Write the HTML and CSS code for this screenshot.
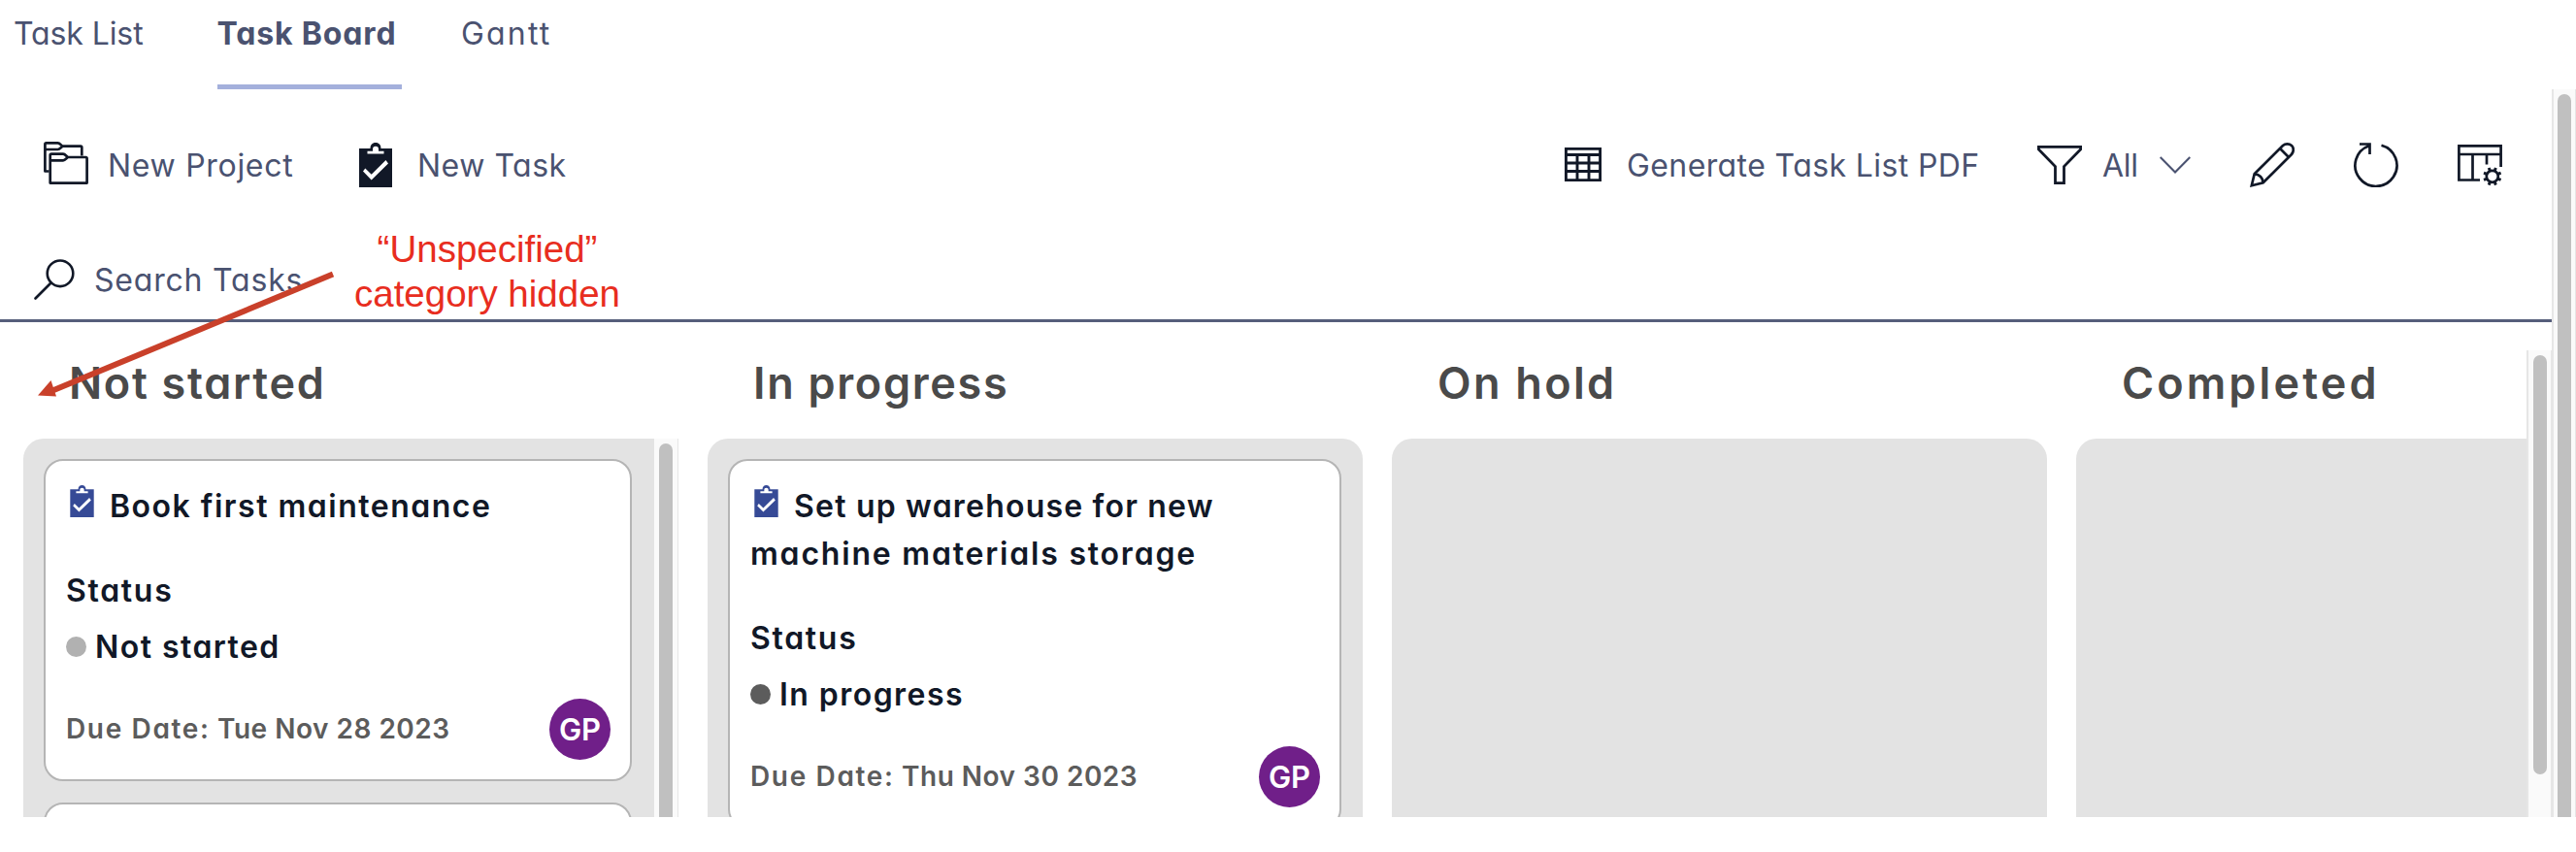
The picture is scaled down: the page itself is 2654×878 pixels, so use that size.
FILE: index.html
```html
<!DOCTYPE html>
<html lang="en">
<head>
<meta charset="utf-8">
<title>Task Board</title>
<link rel="stylesheet" href="styles.css">
</head>
<body>
<svg class="defs" aria-hidden="true">
  <symbol id="clipboard" viewBox="0 0 34 46">
    <path fill="currentColor" fill-rule="evenodd" d="M0 6H11.5C11.5 2.500 13.500 0 17 0S22.500 2.500 22.500 6H34V46H0ZM8.500 8.800V11.500H25.500V8.800H20V7C20 5 19 3.800 17 3.800S14 5 14 7V8.800ZM6.300 26.500 4 29.500 12.700 38.500 30 21.500 27.500 18 12.700 32.800Z"/>
  </symbol>
</svg>

<nav class="tabs">
  <a class="tab tab-list">Task List</a>
  <a class="tab tab-board">Task Board</a>
  <a class="tab tab-gantt">Gantt</a>
</nav>

<div class="frame">
  <main class="main">
    <div class="toolbar">
      <button class="tool">
        <svg class="ic-project" viewBox="0 0 46 44" fill="none" stroke="currentColor" stroke-width="2.700" stroke-linejoin="round">
          <path d="M5.500 30.500H1.400V2.700Q1.400 1.400 2.700 1.400H14.500C17 1.400 18.500 4.700 20 4.700H38Q39.300 4.700 39.300 6V14.500M1.400 8H14.500C17 8 18.500 4.700 20 4.700"/>
          <path d="M6.700 42.600V14Q6.700 12.700 8 12.700H20C22.500 12.700 24 16 25.500 16H43.300Q44.600 16 44.600 17.300V42.600ZM6.700 19.300H20C22.500 19.300 24 16 25.500 16"/>
        </svg>
        <span class="label-project">New Project</span>
      </button>
      <button class="tool tool-task">
        <svg class="ic-task"><use href="#clipboard"/></svg>
        <span class="label-task">New Task</span>
      </button>
      <div class="tools-end">
        <button class="tool tool-pdf">
          <svg class="ic-table" viewBox="0 0 38 35" fill="none" stroke="currentColor" stroke-width="2.900">
            <path d="M1.400 1.400H36.600V33.600H1.400ZM1.400 7.500H36.600M1.400 16H36.600M1.400 24.500H36.600M13 7.500V33.600M25 7.500V33.600"/>
          </svg>
          <span class="label-pdf">Generate Task List PDF</span>
        </button>
        <button class="tool tool-filter">
          <svg class="ic-filter" viewBox="0 0 46 40" fill="none" stroke="currentColor" stroke-width="2.800">
            <path d="M1.400 1.400H44.600V4L27.500 21.500V38.600H18.500V21.500L1.400 4Z"/>
          </svg>
          <span class="label-all">All</span>
          <svg class="ic-chevron" viewBox="0 0 32 18" fill="none" stroke="currentColor" stroke-width="2.100"><path d="M.7 1 16 16.500 31.300 1"/></svg>
        </button>
        <button class="tool">
          <svg class="ic-square" viewBox="0 0 46 46" fill="none" stroke="currentColor" stroke-width="2.700">
            <path d="M1.800 44.200 4.700 32.300 34 3C36.500.8 40.500.8 43 3S45.200 9.500 43 12L13.700 41.300ZM4.700 32.300C9.500 32.300 13.700 36.500 13.700 41.300M31 6 40 15"/>
          </svg>
        </button>
        <button class="tool">
          <svg class="ic-square" viewBox="0 0 46 46" fill="none" stroke="currentColor" stroke-width="2.700">
            <path d="M28.500 2.700A21.500 21.500 0 1 1 15.800 3.200M6 1.500H16.500V12"/>
          </svg>
        </button>
        <button class="tool">
          <svg class="ic-columns" viewBox="0 0 46 43" fill="none" stroke="currentColor" stroke-width="2.700">
            <path d="M23 36.500H1.400V1.400H44.600V23M1.400 10H44.600M15.500 10V36.500M30 10V20.500"/>
            <circle cx="35.800" cy="32.800" r="6"/>
            <path stroke-width="3" d="M38.100 27.300 39.400 24M41.300 30.500 44.600 29.200M41.300 35.100 44.600 36.400M38.100 38.300 39.400 41.600M33.500 38.300 32.200 41.600M30.300 35.100 27 36.400M30.300 30.500 27 29.200M33.500 27.300 32.200 24"/>
          </svg>
        </button>
      </div>
    </div>
    <div class="search">
      <svg class="ic-search" viewBox="0 0 42 42" fill="none" stroke="currentColor" stroke-width="2.600" stroke-linecap="round"><circle cx="27" cy="14.800" r="13.300"/><path d="M17.500 24.500 1.500 40.500"/></svg>
      <span class="label-search">Search Tasks</span>
    </div>

    <div class="board-area">
      <div class="board">
        <section class="column">
          <h2 class="heading">Not started</h2>
          <div class="lane lane-scroll">
            <div class="cards">
              <article class="card">
                <p class="title title-book"><svg class="ic-card"><use href="#clipboard"/></svg>Book first maintenance</p>
                <p class="status-label">Status</p>
                <p class="status"><i class="dot dot-light"></i>Not started</p>
                <div class="foot"><span class="due">Due Date:</span><span class="date">Tue Nov 28 2023</span><b class="avatar">GP</b></div>
              </article>
              <article class="card card-next"></article>
            </div>
            <div class="scroll scroll-lane"><div class="thumb"></div></div>
          </div>
        </section>
        <section class="column">
          <h2 class="heading">In progress</h2>
          <div class="lane">
            <div class="cards">
              <article class="card">
                <p class="title title-setup"><svg class="ic-card"><use href="#clipboard"/></svg>Set up warehouse for new<br><span class="title-second">machine materials storage</span></p>
                <p class="status-label">Status</p>
                <p class="status"><i class="dot dot-dark"></i>In progress</p>
                <div class="foot"><span class="due">Due Date:</span><span class="date">Thu Nov 30 2023</span><b class="avatar">GP</b></div>
              </article>
            </div>
          </div>
        </section>
        <section class="column">
          <h2 class="heading heading-hold">On hold</h2>
          <div class="lane"></div>
        </section>
        <section class="column">
          <h2 class="heading heading-done">Completed</h2>
          <div class="lane"></div>
        </section>
      </div>
      <div class="scroll scroll-board"><div class="thumb"></div></div>
    </div>
  </main>
  <div class="scroll scroll-page"><div class="thumb"></div></div>
</div>

<svg class="arrow" viewBox="0 0 310 134"><path stroke="#c9402a" stroke-width="6" d="M304 6.500 14 127"/><path fill="#c9402a" d="M0 131.500 13.500 116 19 132.500Z"/></svg>
<p class="note">“Unspecified”<br>category hidden</p>
</body>
</html>
```
FILE: styles.css
```css
* { box-sizing: border-box; }
body {
  position: relative;
  margin: 0;
  width: 2654px;
  height: 878px;
  overflow: hidden;
  background: #fff;
  color: #4a5270;
  font: 400 32px/49px Inter, "Open Sans", sans-serif;
  font-feature-settings: "cv11";
}
p, h2 { margin: 0; }
svg { flex: none; display: block; }
.defs { position: absolute; width: 0; height: 0; }

.tabs { display: flex; height: 92px; padding-left: 14px; }
.tab { height: 92px; padding-top: 10px; white-space: nowrap; }
.tab-list { width: 209.500px; letter-spacing: -.1px; }
.tab-board {
  width: 190px;
  height: 92px;
  margin-right: 61.500px;
  border-bottom: 5px solid #a4b0dc;
  font-weight: 700;
  letter-spacing: .850px;
}
.tab-gantt { letter-spacing: 2.200px; }

.frame { display: flex; height: 750px; }
.main { display: flex; flex-direction: column; width: 2629px; }

.toolbar { display: flex; align-items: center; height: 155px; padding: 0 51px 0 45px; }
.tool {
  display: flex;
  align-items: center;
  padding: 0;
  border: 0;
  background: none;
  color: #111827;
  font: inherit;
  font-feature-settings: inherit;
  text-align: left;
  white-space: nowrap;
}
.tool span { padding-top: 2px; color: #4a5270; }
.ic-project { width: 46px; height: 44px; margin: 0 20px 3px 0; }
.label-project { width: 191px; letter-spacing: .7px; }
.tool-task { margin-left: 68px; }
.ic-task { width: 34px; height: 46px; margin-right: 26px; }
.label-task { letter-spacing: .5px; }
.tools-end { display: flex; align-items: center; margin-left: auto; gap: 61px; }
.ic-table { width: 38px; height: 35px; margin-right: 26px; }
.label-pdf { width: 362px; letter-spacing: .4px; }
.ic-filter { width: 46px; height: 40px; margin-right: 21px; }
.label-all { width: 59px; letter-spacing: -.3px; }
.ic-chevron { width: 32px; height: 18px; color: #4a5270; }
.ic-square { width: 46px; height: 46px; }
.ic-columns { width: 46px; height: 43px; margin-top: 2px; }

.search {
  display: flex;
  align-items: center;
  height: 85px;
  padding-left: 35px;
  border-bottom: 3px solid #565e7b;
  color: #111827;
}
.ic-search { width: 42px; height: 42px; margin-right: 20px; }
.label-search { color: #4a5270; letter-spacing: .8px; }

.board-area { display: flex; flex: 1; min-height: 0; align-items: flex-end; }
.board { display: flex; width: 2603px; height: 100%; padding-left: 24px; gap: 30px; overflow: hidden; }
.column { flex: none; display: flex; flex-direction: column; width: 675px; height: 100%; }
.heading {
  height: 120px;
  padding: 38px 0 0 47px;
  color: #4a4a4a;
  font-size: 45px;
  font-weight: 600;
  line-height: 50px;
  letter-spacing: 1.700px;
  white-space: nowrap;
}
.heading-hold { letter-spacing: 2.300px; }
.heading-done { letter-spacing: 3.100px; }
.lane { display: flex; flex: 1; min-height: 0; overflow: hidden; border-radius: 21px 21px 0 0; background: #e3e3e3; }
.lane-scroll { border-top-right-radius: 0; }
.cards { flex: 1; display: flex; flex-direction: column; gap: 22px; padding: 21px 22px 0 21px; }
.lane-scroll .cards { padding-right: 23px; }
.card {
  flex: none;
  padding: 22px 20px 20px 21px;
  border: 2px solid #b5b5b5;
  border-radius: 20px;
  background: #fff;
  color: #111827;
  font-weight: 600;
  white-space: nowrap;
}
.card-next { height: 200px; }
.title-book { letter-spacing: 1.500px; }
.title-setup { letter-spacing: 1.200px; }
.title-second { letter-spacing: 1.800px; }
.ic-card { display: inline-block; width: 25px; height: 33px; margin: 0 16px 0 4px; vertical-align: baseline; color: #364a96; }
.status-label { margin-top: 38px; letter-spacing: 1.700px; }
.status { display: flex; align-items: center; margin-top: 9px; letter-spacing: 1.450px; }
.dot { width: 21px; height: 21px; margin: 0 9px 0 0; border-radius: 50%; }
.dot-light { background: #b1b1b1; }
.dot-dark { background: #5c5c5c; }
.foot { display: flex; align-items: center; height: 63px; margin-top: 29px; color: #5c5c5c; font-size: 28px; }
.due { width: 156px; letter-spacing: 1.650px; }
.date { letter-spacing: .5px; }
.avatar {
  width: 63px;
  height: 63px;
  margin-left: auto;
  border-radius: 50%;
  background: #701f89;
  color: #fff;
  font-size: 31px;
  font-weight: 600;
  line-height: 63px;
  text-align: center;
}

.scroll { flex: none; display: flex; justify-content: center; border: solid #e6e6e6; border-width: 0 1px 0 2px; background: #fafafa; }
.thumb { background: #c0c0c0; border-radius: 7px; }
.scroll-lane { width: 25px; padding-top: 5px; border-left: 0; }
.scroll-lane .thumb { width: 14px; border-radius: 7px 7px 0 0; }
.scroll-board { width: 26px; height: 481px; padding-top: 5px; }
.scroll-board .thumb { width: 14px; height: 432px; }
.scroll-page { width: 25px; height: 750px; padding-top: 5px; }
.scroll-page .thumb { width: 14px; border-radius: 7px 7px 0 0; }

.arrow { position: absolute; left: 39px; top: 276px; width: 310px; height: 134px; }
.note {
  position: absolute;
  left: 352px;
  top: 234px;
  width: 300px;
  color: #e82d20;
  font: 38.500px/46px "Liberation Sans", Arial, sans-serif;
  text-align: center;
  white-space: nowrap;
}
```
